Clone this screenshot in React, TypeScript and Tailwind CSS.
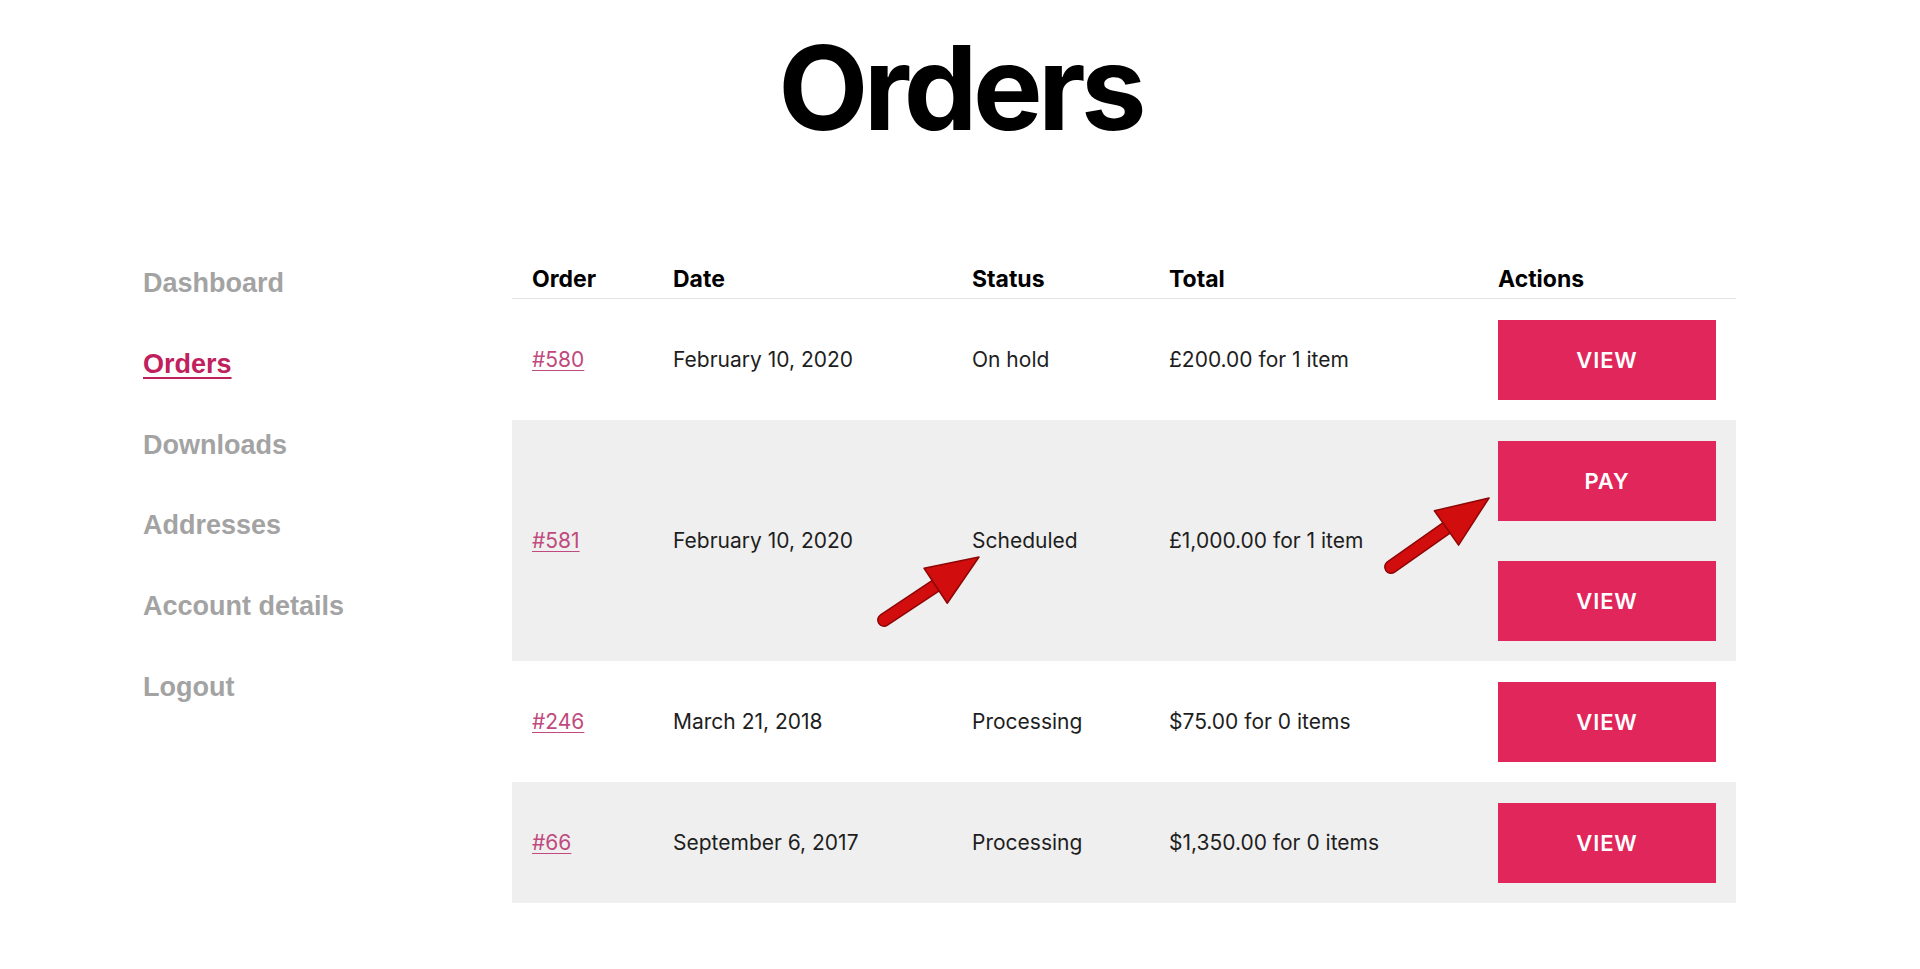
const navItems = ['Dashboard', 'Orders', 'Downloads', 'Addresses', 'Account details', 'Logout'];

type Order = {
	id: string;
	date: string;
	status: string;
	total: string;
	actions: string[];
	shaded?: boolean;
};

const orders: Order[] = [
	{ id: '#580', date: 'February 10, 2020', status: 'On hold', total: '£200.00 for 1 item', actions: ['View'] },
	{ id: '#581', date: 'February 10, 2020', status: 'Scheduled', total: '£1,000.00 for 1 item', actions: ['Pay', 'View'], shaded: true },
	{ id: '#246', date: 'March 21, 2018', status: 'Processing', total: '$75.00 for 0 items', actions: ['View'] },
	{ id: '#66', date: 'September 6, 2017', status: 'Processing', total: '$1,350.00 for 0 items', actions: ['View'], shaded: true },
];

const cols = 'grid grid-cols-[141px_299px_197px_329px_258px]';

function Arrow({ x1, y1, x2, y2 }: { x1: number; y1: number; x2: number; y2: number }) {
	const len = Math.hypot(x2 - x1, y2 - y1);
	const deg = (Math.atan2(y2 - y1, x2 - x1) * 180) / Math.PI;
	const head = 52;
	return (
		<g transform={`translate(${x1} ${y1}) rotate(${deg})`}>
			<line x1={0} y1={0} x2={len - head + 6} y2={0} stroke="#8f0606" strokeWidth={14} strokeLinecap="round" />
			<line x1={0} y1={0} x2={len - head + 6} y2={0} stroke="#d20d0d" strokeWidth={11} strokeLinecap="round" />
			<polygon
				points={`${len},0 ${len - head},-21 ${len - head},21`}
				fill="#d20d0d"
				stroke="#8f0606"
				strokeWidth={1.5}
				strokeLinejoin="round"
			/>
		</g>
	);
}

export default function App() {
	return (
		<div className="relative w-[1920px] h-[969px] bg-white overflow-hidden font-['Inter',sans-serif]">
			{/* Title */}
			<h1 className="pt-[29px] text-center text-[117px] leading-none font-bold tracking-[-0.04em] text-black">
				Orders
			</h1>

			<div className="mt-[97px] flex pl-[143px]">
				{/* Account nav */}
				<nav className="w-[369px] font-['Liberation_Sans',Arial,sans-serif] text-[27px] font-bold">
					{navItems.map((item) => (
						<div key={item} className="h-[80.8px] leading-[80.8px]">
							{item === 'Orders' ? (
								<a href="#orders" className="text-[#c0215c] underline decoration-2 underline-offset-[4px]">
									{item}
								</a>
							) : (
								<a href="#" className="text-[#a3a3a3]">
									{item}
								</a>
							)}
						</div>
					))}
				</nav>

				{/* Orders table */}
				<div className="w-[1224px] text-[21px] text-[#1e1e1e]">
					<div className={`${cols} pt-[20px] pb-[3px] border-b border-[#e4e4e4] text-[23px] leading-[32px] font-bold text-black`}>
						<div className="pl-[20px]">Order</div>
						<div className="pl-[20px]">Date</div>
						<div className="pl-[20px]">Status</div>
						<div className="pl-[20px]">Total</div>
						<div className="pl-[20px]">Actions</div>
					</div>

					{orders.map((o) => (
						<div key={o.id} className={`${cols} items-center pt-[21px] pb-[20px] ${o.shaded ? 'bg-[#efefef]' : ''}`}>
							<div className="pl-[20px]">
								<a href="#" className="text-[#c04a7d] underline decoration-1 underline-offset-[3px]">
									{o.id}
								</a>
							</div>
							<div className="pl-[20px]">{o.date}</div>
							<div className="pl-[20px]">{o.status}</div>
							<div className="pl-[20px]">{o.total}</div>
							<div className="px-[20px] flex flex-col gap-[40px]">
								{o.actions.map((a) => (
									<button
										key={a}
										className="w-[218px] h-[80px] bg-[#e1265b] text-white text-[22px] font-semibold uppercase tracking-[0.04em]"
									>
										{a}
									</button>
								))}
							</div>
						</div>
					))}
				</div>
			</div>

			{/* Annotation arrows */}
			<svg className="absolute left-0 top-0 pointer-events-none" width={1920} height={969}>
				<Arrow x1={884} y1={620} x2={979} y2={557} />
				<Arrow x1={1391} y1={567} x2={1489} y2={498} />
			</svg>
		</div>
	);
}
